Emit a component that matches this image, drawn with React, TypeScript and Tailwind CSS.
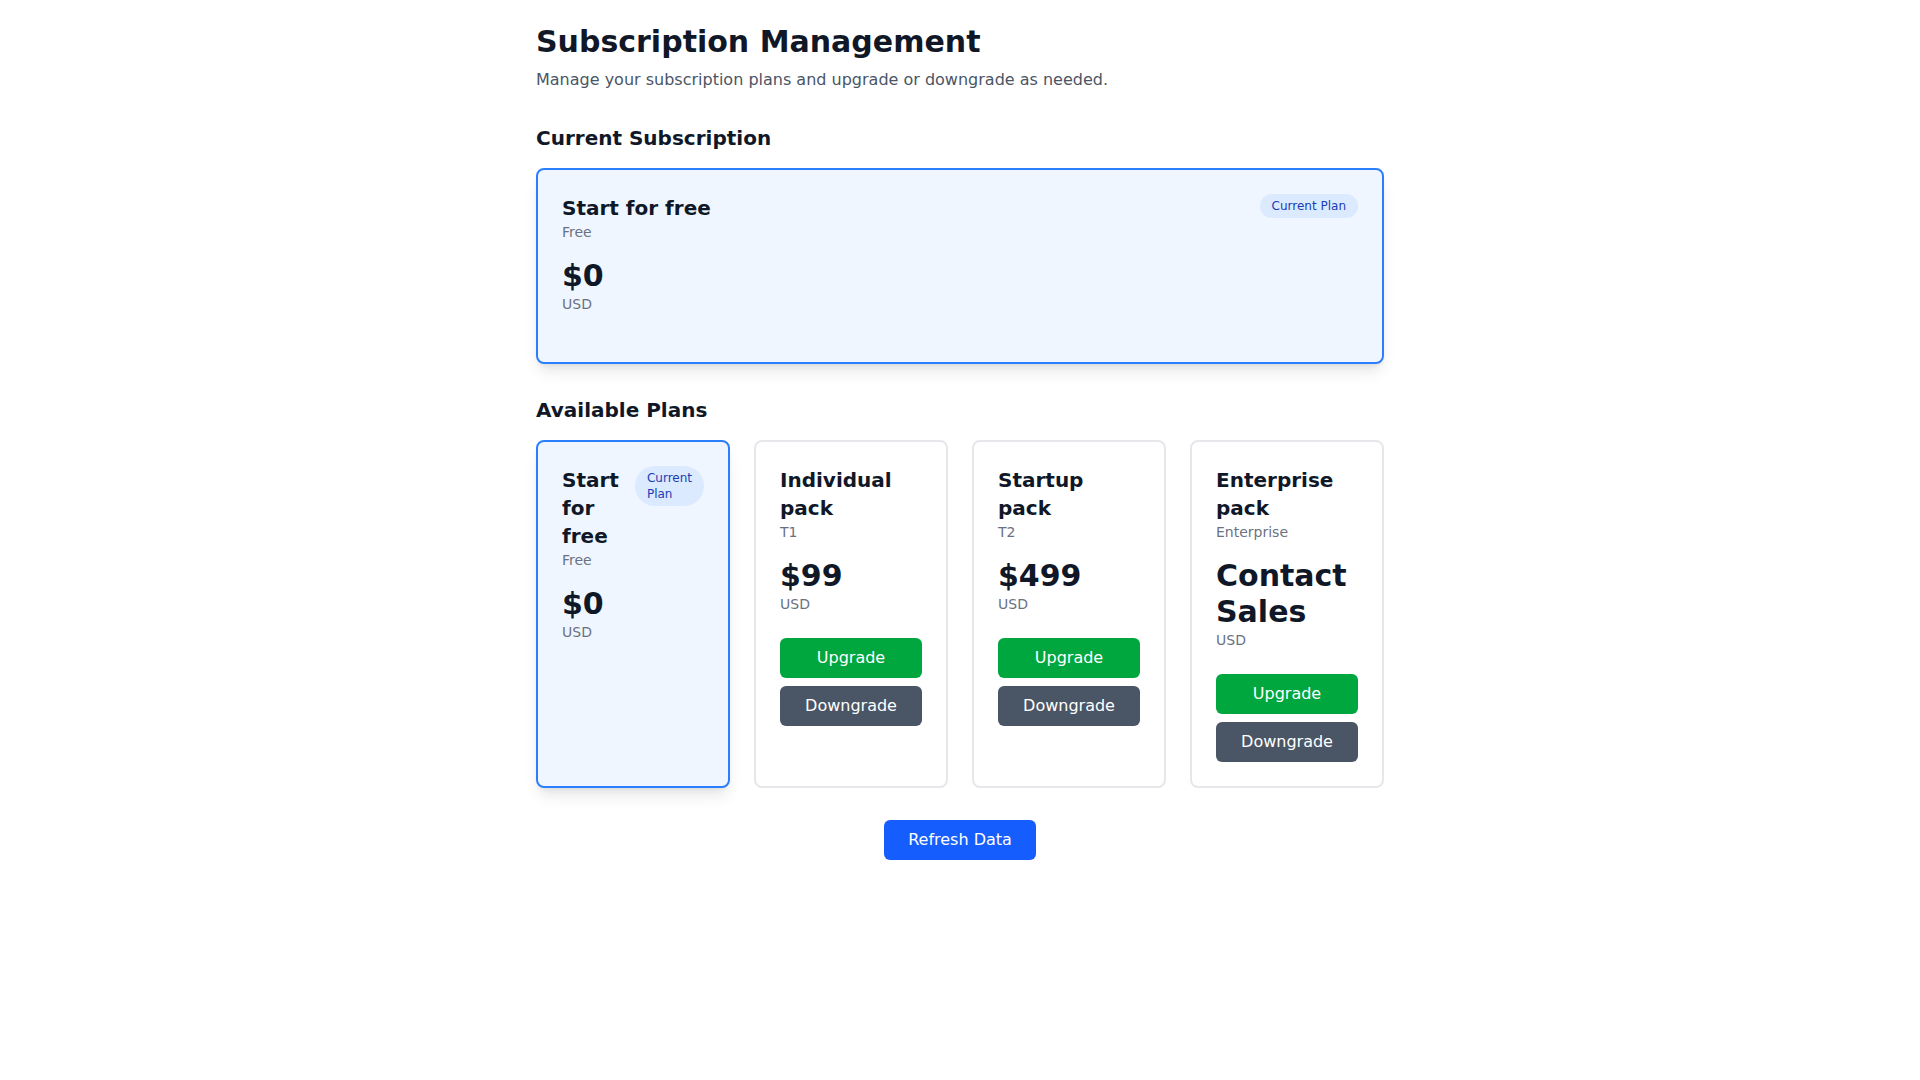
interface Plan {
  id: string;
  name: string;
  tier: string;
  price: string;
  currency: string;
}

const plans: Plan[] = [
  { id: "free", name: "Start for free", tier: "Free", price: "$0", currency: "USD" },
  { id: "t1", name: "Individual pack", tier: "T1", price: "$99", currency: "USD" },
  { id: "t2", name: "Startup pack", tier: "T2", price: "$499", currency: "USD" },
  { id: "ent", name: "Enterprise pack", tier: "Enterprise", price: "Contact Sales", currency: "USD" },
];

const currentPlanId = "free";

const PlanCard = ({ plan, isCurrent }: { plan: Plan; isCurrent: boolean }) => (
  <div
    className={`p-6 rounded-lg border-2 ${
      isCurrent ? "border-blue-500 bg-blue-50 shadow-lg" : "border-gray-200 bg-white"
    }`}
  >
    <div className="flex justify-between items-start">
      <div>
        <h3 className="text-xl font-bold text-gray-900">{plan.name}</h3>
        <p className="text-sm text-gray-500">{plan.tier}</p>
      </div>
      {isCurrent && (
        <span className="px-3 py-1 text-xs rounded-full bg-blue-100 text-blue-800">
          Current Plan
        </span>
      )}
    </div>
    <div className="mt-4">
      <p className="text-3xl font-bold text-gray-900">{plan.price}</p>
      <p className="text-sm text-gray-500">{plan.currency}</p>
    </div>
    <div className="mt-6 space-y-2">
      {!isCurrent && (
        <>
          <button className="w-full py-2 rounded-md bg-green-600 text-white">Upgrade</button>
          <button className="w-full py-2 rounded-md bg-gray-600 text-white">Downgrade</button>
        </>
      )}
    </div>
  </div>
);

const App = () => {
  const current = plans.find((p) => p.id === currentPlanId)!;

  return (
    <div className="min-h-screen bg-white font-['DejaVu_Sans',sans-serif]">
      <div className="max-w-4xl mx-auto p-6">
        <div className="mb-8">
          <h1 className="text-3xl font-bold text-gray-900">Subscription Management</h1>
          <p className="mt-2 text-gray-600">
            Manage your subscription plans and upgrade or downgrade as needed.
          </p>
        </div>

        {/* Current */}
        <div className="mb-8">
          <h2 className="text-xl font-semibold text-gray-900 mb-4">Current Subscription</h2>
          <PlanCard plan={current} isCurrent />
        </div>

        {/* Available */}
        <div>
          <h2 className="text-xl font-semibold text-gray-900 mb-4">Available Plans</h2>
          <div className="grid grid-cols-4 gap-6">
            {plans.map((plan) => (
              <PlanCard key={plan.id} plan={plan} isCurrent={plan.id === currentPlanId} />
            ))}
          </div>
        </div>

        <div className="mt-8 flex justify-center">
          <button className="px-6 py-2 rounded-md bg-blue-600 text-white">Refresh Data</button>
        </div>
      </div>
    </div>
  );
};

export default App;
